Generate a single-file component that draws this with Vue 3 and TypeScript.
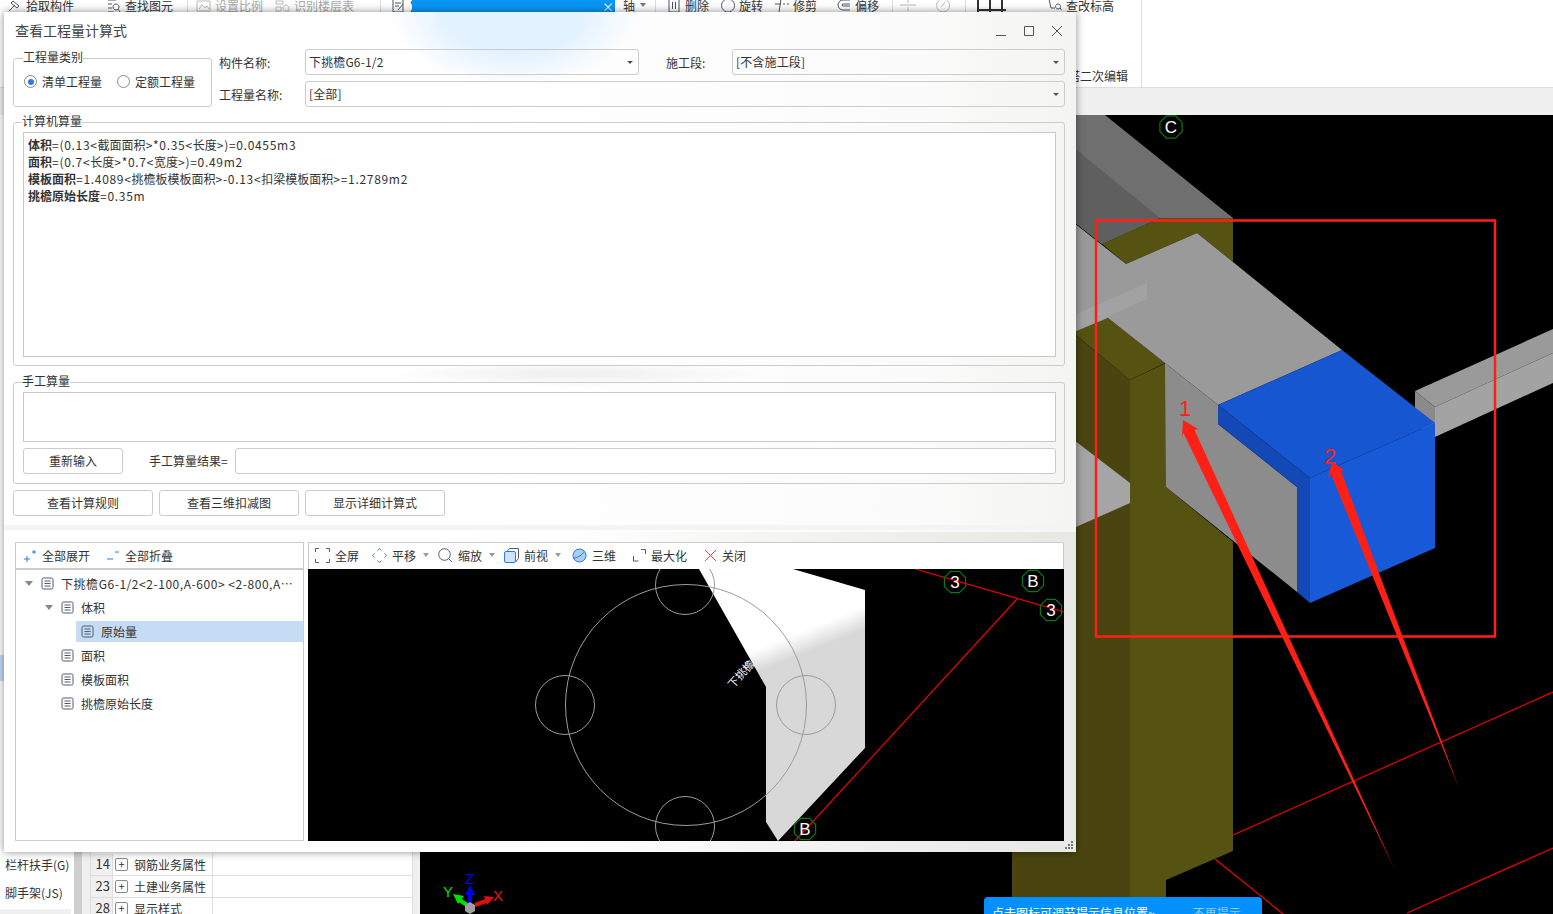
<script setup lang="ts">
import { ref } from "vue";

interface TopItem { text?: string; w?: number; ml: number; icon?: string; off?: boolean; sep?: boolean; caret?: boolean; grid?: boolean }
interface ToolItem { text: string; icon: string; ml: number; caret?: boolean }

const topItems: TopItem[] = [
  { text: "拾取构件", w: 48, ml: 7, icon: "M2 13 8 7M6 3l6 5-2 2-6-5z" },
  { text: "查找图元", w: 48, ml: 32, icon: "M2 2h8M2 6h4M2 10h4M2 14h6M10 6a3 3 0 1 0 .1 0M12 11l2 3" },
  { sep: true, ml: 14 },
  { text: "设置比例", w: 48, ml: 8, icon: "M1 3h13v10H1zM3 11l3-4 3 3 2-2 2 3", off: true },
  { text: "识别楼层表", w: 60, ml: 12, icon: "M1 3h7v3H1zM1 9h5v4H1zM11 7a3 3 0 1 0 .1 0M13 12l2 2", off: true },
  { sep: true, ml: 26 },
  { text: "定", w: 14, ml: 10, icon: "M2 1h10v13H2zM4 5h6M4 8h4M12 6l-5 6" },
  { text: "轴", w: 12, ml: 199, caret: true },
  { sep: true, ml: 9 },
  { text: "删除", w: 24, ml: 10, icon: "M3 1h10v13H3zM6.500 4v7M9.500 4v7" },
  { text: "旋转", w: 24, ml: 11, icon: "M8 1a6.500 6.500 0 1 0 .1 0" },
  { text: "修剪", w: 24, ml: 11, icon: "M1 6h6M9 6h2M13 6h2M7 1 5 14" },
  { text: "偏移", w: 24, ml: 19, icon: "M14 2H7a5 5 0 0 0 0 10h7M14 6H7a1 1 0 0 0 0 2h7" },
  { sep: true, ml: 13 },
  { ml: 7, off: true, icon: "M0 7h6M10 7h6M8 1v4M8 9v4M6 7h4" },
  { ml: 19, off: true, icon: "M8 1a6.500 6.500 0 1 0 .1 0M6 9l4-5" },
  { sep: true, ml: 14 },
  { ml: 11, grid: true },
  { text: "查改标高", w: 48, ml: 40, icon: "M2 1l2 9h4M11 6a2.500 2.500 0 1 0 .1 0M13 10l1.500 2" },
];

const viewTools: ToolItem[] = [
  { text: "全屏", icon: "full", ml: 6 },
  { text: "平移", icon: "pan", ml: 13, caret: true },
  { text: "缩放", icon: "zoom", ml: 9, caret: true },
  { text: "前视", icon: "cube", ml: 9, caret: true },
  { text: "三维", icon: "globe", ml: 11 },
  { text: "最大化", icon: "max", ml: 17 },
  { text: "关闭", icon: "close", ml: 17 },
];

const formulas = [
  { name: "体积", rest: "=(0.13<截面面积>*0.35<长度>)=0.0455m3" },
  { name: "面积", rest: "=(0.7<长度>*0.7<宽度>)=0.49m2" },
  { name: "模板面积", rest: "=1.4089<挑檐板模板面积>-0.13<扣梁模板面积>=1.2789m2" },
  { name: "挑檐原始长度", rest: "=0.35m" },
];

// 西文和符号比中文字宽，拆开后单独加字距
function tokens(s: string): { t: string; latin: boolean }[] {
  return (s.match(/[\u4e00-\u9fff]+|[^\u4e00-\u9fff]+/g) ?? []).map((t) => ({
    t,
    latin: !/[\u4e00-\u9fff]/.test(t),
  }));
}

const tree = [
  { label: "下挑檐G6-1/2<2-100,A-600> <2-800,A-600>", depth: 0, open: true },
  { label: "体积", depth: 1, open: true },
  { label: "原始量", depth: 2, selected: true },
  { label: "面积", depth: 1 },
  { label: "模板面积", depth: 1 },
  { label: "挑檐原始长度", depth: 1 },
];

const attrRows = [
  { no: 14, label: "钢筋业务属性" },
  { no: 23, label: "土建业务属性" },
  { no: 28, label: "显示样式" },
];

const quantityType = ref("list");

// 轴号圈是八边形
function octagon(cx: number, cy: number, r: number): string {
  const pts: string[] = [];
  for (let i = 0; i < 8; i++) {
    const a = (Math.PI / 4) * i + Math.PI / 8;
    pts.push(`${(cx + r * Math.cos(a)).toFixed(1)},${(cy + r * Math.sin(a)).toFixed(1)}`);
  }
  return pts.join(" ");
}

const viewBadges = [
  { t: "3", x: 955, y: 582 },
  { t: "B", x: 1033, y: 581 },
  { t: "3", x: 1051, y: 610 },
  { t: "B", x: 805, y: 829 },
];
</script>

<template>
  <div class="page">
    <header class="topbar">
      <div class="top-row">
        <template v-for="(it, i) in topItems" :key="i">
          <i v-if="it.sep" class="top-sep" :style="{ marginLeft: it.ml + 'px' }"></i>
          <svg v-else-if="it.grid" class="grid-ico" :style="{ marginLeft: it.ml + 'px' }" width="30" height="14" viewBox="0 0 30 14"><path d="M1 0v14M13 0v14M25 0v14M1 12h28" /></svg>
          <div v-else class="top-item" :class="{ off: it.off }" :style="{ marginLeft: it.ml + 'px' }">
            <svg v-if="it.icon" width="16" height="15" viewBox="0 0 16 15"><path :d="it.icon" /></svg>
            <span v-if="it.text" :style="{ width: it.w + 'px' }">{{ it.text }}</span>
            <i v-if="it.caret" class="top-caret"></i>
          </div>
        </template>
      </div>
      <div class="top-note">搭二次编辑</div>
    </header>
    <div class="band"></div>

    <div class="main">
      <aside class="side">
        <div class="side-mark"></div>
        <div class="side-item">栏杆扶手(G)</div>
        <div class="side-item">脚手架(JS)</div>
        <div class="side-current"></div>
      </aside>
      <div class="side-scroll"></div>
      <div class="attrs">
        <div v-for="r in attrRows" :key="r.no" class="attr-row">
          <span class="attr-no">{{ r.no }}</span>
          <span class="attr-name"><i class="plus">+</i>{{ r.label }}</span>
          <span class="attr-val"></span>
        </div>
      </div>

      <svg class="scene" viewBox="420 115 1133 799" width="1133" height="799">
        <!-- 后方梁 -->
        <polygon points="1040,115 1105,115 1233,218 1160,218 1102,244 1040,195" fill="#6f6f6f" />
        <polygon points="1040,120 1160,218 1102,244 1040,195" fill="#5f5f5f" />
        <polygon points="1160,218 1233,218 1233,262 1197,233 1126,264 1102,244" fill="#555212" />
        <!-- 柱 -->
        <polygon points="1012,282 1130,380 1130,914 1012,914" fill="#4a4510" />
        <polygon points="1130,380 1166,363 1166,487 1233,542 1233,851 1166,880 1166,914 1130,914" fill="#555212" />
        <polygon points="1040,340 1108,318 1165,363 1130,380 1076,335" fill="#555212" />
        <!-- 梁 -->
        <polygon points="1040,196 1126,264 1197,233 1342,350 1218,405 1165,363 1108,318 1040,346" fill="#9a9a9a" />
        <polygon points="1040,330 1147,283 1147,299 1040,347" fill="#a2a2a2" />
        <polygon points="1165,363 1218,405 1218,424 1297,487 1297,592 1166,487" fill="#8c8c8c" />
        <polygon points="1040,414 1130,483 1130,503 1040,543" fill="#a5a5a5" />
        <!-- 右侧次梁 -->
        <polygon points="1415,391 1553,329 1553,353 1435,407" fill="#9a9a9a" />
        <polygon points="1435,407 1553,353 1553,383 1435,437" fill="#a3a3a3" />
        <polygon points="1415,391 1435,407 1435,437 1415,424" fill="#8a8a8a" />
        <!-- 挑檐（蓝） -->
        <polygon points="1342,350 1435,423 1310,478 1218,405" fill="#1656d0" />
        <polygon points="1310,478 1435,423 1435,548 1310,603" fill="#1859d8" />
        <polygon points="1218,405 1310,478 1310,603 1297,592 1297,487 1218,424" fill="#1448b4" />
        <!-- 轴网 -->
        <g class="grid-line">
          <line x1="1233" y1="835" x2="1553" y2="692" />
          <line x1="1407" y1="913" x2="1553" y2="848" />
          <line x1="1215" y1="859" x2="1283" y2="914" />
        </g>
        <polygon :points="octagon(1171, 127, 12)" class="badge-thin" />
        <text x="1171" y="133" class="badge-text">C</text>
        <!-- 标注 -->
        <rect x="1096" y="220.500" width="399" height="416" class="mark-rect" />
        <polygon points="1183,420 1198,429 1194.500,430 1395,870 1183.500,433 1182,437" fill="#ff2015" />
        <polygon points="1332,462 1344,470 1341,471 1459,788 1331,474 1328,478" fill="#ff2015" />
        <text x="1185" y="416" class="mark-num">1</text>
        <text x="1330" y="464" class="mark-num">2</text>
        <!-- 坐标轴 -->
        <g class="axis">
          <path d="M470 905V892" stroke="#0000f0" stroke-width="4" />
          <polygon points="470,885 465,895 475,895" fill="#0000f0" />
          <path d="M467 905 458 899" stroke="#00e000" stroke-width="4" />
          <polygon points="453,894 464,896 458,904" fill="#00e000" />
          <path d="M475 905 486 901" stroke="#e01010" stroke-width="4" />
          <polygon points="494,897 484,896 487,905" fill="#e01010" />
          <polygon points="465,905 470,902 475,905 475,911 470,914 465,911" fill="#a0a0a0" />
          <text x="448" y="897" fill="#00e000">Y</text>
          <text x="469.500" y="884" fill="#0000f0">Z</text>
          <text x="498" y="901" fill="#f01010">X</text>
        </g>
      </svg>
    </div>

    <div class="toast">
      <span>点击图标可调节提示信息位置~</span>
      <span class="toast-off">不再提示</span>
    </div>
    <div class="blue-tab"><span>×</span></div>

    <section class="dialog">
      <div class="titlebar">
        <span class="title">查看工程量计算式</span>
        <div class="win-btns">
          <svg width="12" height="12" viewBox="0 0 12 12"><path d="M1 10.500h10" /></svg>
          <svg width="12" height="12" viewBox="0 0 12 12"><path d="M1.500 1.500h9v9h-9z" /></svg>
          <svg width="12" height="12" viewBox="0 0 12 12"><path d="M1 1l10 10M11 1 1 11" /></svg>
        </div>
      </div>

      <div class="head">
        <fieldset class="group type-group">
          <legend>工程量类别</legend>
          <label class="radio" @click="quantityType = 'list'">
            <i class="dot" :class="{ on: quantityType === 'list' }"></i>清单工程量
          </label>
          <label class="radio" @click="quantityType = 'norm'">
            <i class="dot" :class="{ on: quantityType === 'norm' }"></i>定额工程量
          </label>
        </fieldset>
        <div class="head-fields">
          <div class="field-row">
            <span class="lbl lbl-a">构件名称:</span>
            <div class="combo combo-a">下挑檐G6-1/2<i class="caret"></i></div>
            <span class="lbl lbl-b">施工段:</span>
            <div class="combo combo-b">[不含施工段]<i class="caret"></i></div>
          </div>
          <div class="field-row">
            <span class="lbl lbl-a">工程量名称:</span>
            <div class="combo combo-b">[全部]<i class="caret"></i></div>
          </div>
        </div>
      </div>

      <fieldset class="group calc-group">
        <legend>计算机算量</legend>
        <div class="memo memo-calc">
          <div v-for="f in formulas" :key="f.name" class="formula">
            <b>{{ f.name }}</b><span v-for="(p, i) in tokens(f.rest)" :key="i" :class="{ latin: p.latin }">{{ p.t }}</span>
          </div>
        </div>
      </fieldset>

      <fieldset class="group hand-group">
        <legend>手工算量</legend>
        <div class="memo memo-hand"></div>
        <div class="hand-row">
          <button class="btn btn-reset">重新输入</button>
          <span class="hand-lbl">手工算量结果=</span>
          <div class="hand-input"></div>
        </div>
      </fieldset>

      <div class="actions">
        <button class="btn btn-act">查看计算规则</button>
        <button class="btn btn-act">查看三维扣减图</button>
        <button class="btn btn-act">显示详细计算式</button>
      </div>

      <div class="divider"></div>

      <div class="panes">
        <div class="tree-pane">
          <div class="tree-tools">
            <span class="tt"><svg width="14" height="14" viewBox="0 0 14 14"><path d="M1 10h6M4 7v6M9 3h4M11 1v4" /></svg>全部展开</span>
            <span class="tt tt2"><svg width="14" height="14" viewBox="0 0 14 14"><path d="M1 10h6M9 3h4" /></svg>全部折叠</span>
          </div>
          <div class="tree-body">
            <div v-for="n in tree" :key="n.label" class="tree-row" :class="['d' + n.depth]">
              <div class="tree-inner" :class="{ selected: n.selected }">
                <i class="tree-caret" :class="{ hide: !n.open }"></i>
                <svg class="doc" width="13" height="13" viewBox="0 0 13 13">
                  <rect x="1" y="1" width="11" height="11" rx="1.500" />
                  <path d="M3.500 4h6M3.500 6.500h6M3.500 9h6" />
                </svg>
                <span class="tree-label">{{ n.label }}</span>
              </div>
            </div>
          </div>
        </div>

        <div class="view-pane">
          <div class="view-tools">
            <span v-for="t in viewTools" :key="t.text" class="vt" :style="{ marginLeft: t.ml + 'px' }">
              <svg v-if="t.icon === 'full'" width="15" height="15" viewBox="0 0 15 15" class="ico-dark"><path d="M.5 4V.5H4M11 .5h3.500V4M14.500 11v3.500H11M4 14.500H.5V11" /></svg>
              <svg v-else-if="t.icon === 'pan'" width="15" height="15" viewBox="0 0 15 15" class="ico-blue"><path d="M5.500 2.500 7.500.5l2 2M5.500 12.500l2 2 2-2M2.500 5.500l-2 2 2 2M12.500 5.500l2 2-2 2" /></svg>
              <svg v-else-if="t.icon === 'zoom'" width="15" height="15" viewBox="0 0 15 15" class="ico-dark"><circle cx="6.500" cy="6.500" r="5.800" /><path d="M10.800 10.800 14 14" /></svg>
              <svg v-else-if="t.icon === 'cube'" width="15" height="15" viewBox="0 0 15 15" class="ico-cube"><path d="M3 3.500 5.500.5h9v10l-3 3.500" class="back" /><rect x=".5" y="3.500" width="11" height="11" rx="1.500" /></svg>
              <svg v-else-if="t.icon === 'globe'" width="15" height="15" viewBox="0 0 15 15" class="ico-globe"><circle cx="7.500" cy="7.500" r="6.500" /><path d="M1.500 10c4 0 9-3 11-7" /></svg>
              <svg v-else-if="t.icon === 'max'" width="13" height="13" viewBox="0 0 13 13" class="ico-dark"><path d="M.5 7v5h5M8 .5h4.500V5" /></svg>
              <svg v-else width="13" height="13" viewBox="0 0 13 13" class="ico-red"><path d="M1 1l11 11M12 1 1 12" /></svg>
              <span>{{ t.text }}</span>
              <i v-if="t.caret" class="vt-caret"></i>
            </span>
          </div>
          <svg class="view-canvas" viewBox="308 569 756 272" width="756" height="272">
            <defs>
              <linearGradient id="beamShade" gradientUnits="userSpaceOnUse" x1="805" y1="630" x2="813" y2="650">
                <stop offset="0" stop-color="#ffffff" />
                <stop offset="1" stop-color="#d8d8d8" />
              </linearGradient>
            </defs>
            <text x="0" y="0" class="rot-text" transform="translate(733 689) rotate(-48)">下挑檐</text>
            <polygon points="699,569 793,569 865,590 865,748 778,841 766,822 766,687" fill="url(#beamShade)" />
            <g class="cad-circles">
              <circle cx="686" cy="705" r="120.500" />
              <circle cx="685" cy="585" r="29.500" />
              <circle cx="565" cy="705" r="29.500" />
              <circle cx="806" cy="705" r="29.500" />
              <circle cx="685" cy="826" r="29.500" />
            </g>
            <g class="grid-line">
              <line x1="915" y1="569" x2="1064" y2="612" />
              <line x1="1017" y1="599" x2="795" y2="841" />
            </g>
            <g v-for="b in viewBadges" :key="b.x">
              <polygon :points="octagon(b.x, b.y, 11.500)" class="badge" />
              <text :x="b.x" :y="b.y + 6" class="badge-text">{{ b.t }}</text>
            </g>
          </svg>
        </div>
      </div>

      <svg class="grip" width="10" height="10" viewBox="0 0 10 10"><path d="M7 1h2v2H7zM4 4h2v2H4zM7 4h2v2H7zM1 7h2v2H1zM4 7h2v2H4zM7 7h2v2H7z" /></svg>
    </section>
  </div>
</template>

<style>
html, body {
  overflow: hidden;
  background: #fff;
}
</style>

<style scoped>
.page {
  position: relative;
  width: 1553px;
  height: 914px;
  overflow: hidden;
  display: flex;
  flex-direction: column;
  font-family: "Noto Sans CJK SC", "Noto Sans", sans-serif;
  font-size: 12px;
  color: #333;
  background: #fff;
}

/* 顶部工具栏 */
.topbar {
  position: relative;
  height: 88px;
  flex: none;
  box-sizing: border-box;
  border-bottom: 1px solid #ddd;
  overflow: hidden;
}
.topbar::after {
  content: "";
  position: absolute;
  left: 1141px;
  top: 0;
  bottom: 0;
  width: 1px;
  background: #ddd;
}
.top-row {
  display: flex;
  align-items: center;
  height: 12px;
  white-space: nowrap;
  transform: translateY(-1px);
}
.top-item {
  display: flex;
  align-items: center;
  gap: 3px;
  flex: none;
}
.top-item svg {
  fill: none;
  stroke: #4a5568;
  stroke-width: 1;
  flex: none;
}
.top-item.off {
  color: #aaa;
}
.top-item.off svg {
  stroke: #bbb;
}
.top-sep {
  width: 1px;
  height: 16px;
  flex: none;
  background: #ddd;
}
.top-caret {
  margin: 3px 0 0 2px;
  border: 3px solid transparent;
  border-top: 4px solid #777;
}
.grid-ico {
  flex: none;
  fill: none;
  stroke: #333;
  stroke-width: 2;
}
.top-note {
  position: absolute;
  left: 1068px;
  top: 67px;
}
.band {
  height: 27px;
  flex: none;
  background: #f0f0f0;
}

/* 底层主区 */
.main {
  flex: 1;
  display: flex;
  background: #f0f0f0;
  min-height: 0;
}
.side {
  width: 74px;
  flex: none;
  background: #fff;
  box-sizing: border-box;
  padding: 736px 0 0 5px;
  position: relative;
}
.side-mark {
  position: absolute;
  left: 0;
  top: 540px;
  width: 4px;
  height: 26px;
  background: #c6dcf5;
}
.side-item {
  height: 28px;
  line-height: 28px;
  white-space: nowrap;
}
.side-current {
  height: 6px;
  margin: 2px 3px 0 -5px;
  background: #f0f0f0;
}
.side-scroll {
  width: 8px;
  flex: none;
  background: #cfcfcf;
}
.attrs {
  width: 323px;
  flex: none;
  margin-left: 8px;
  box-sizing: border-box;
  padding-top: 739px;
  background: #fff;
  border-left: 1px solid #ddd;
  border-right: 1px solid #ddd;
}
.attr-row {
  display: flex;
  height: 21px;
  line-height: 20px;
  border-bottom: 1px solid #ddd;
}
.attr-no {
  width: 22px;
  flex: none;
  padding-right: 2px;
  box-sizing: border-box;
  text-align: right;
  background: #f0f0f0;
  border-right: 1px solid #ddd;
  font-size: 13px;
}
.attr-name {
  width: 100px;
  flex: none;
  display: flex;
  align-items: center;
  padding-left: 2px;
  box-sizing: border-box;
  border-right: 1px solid #ddd;
}
.plus {
  width: 11px;
  height: 11px;
  margin-right: 6px;
  border: 1px solid #888;
  border-radius: 2px;
  font-style: normal;
  font-size: 11px;
  line-height: 10px;
  text-align: center;
}
.scene {
  position: absolute;
  left: 420px;
  top: 115px;
  background: #000;
}
.grid-line line {
  stroke: #f00000;
  stroke-width: 1.2;
}
.badge,
.badge-thin {
  fill: none;
  stroke: #0a7a0a;
  stroke-width: 1.2;
}
.badge-text {
  fill: #fff;
  font-family: "Liberation Sans", sans-serif;
  font-size: 17px;
  text-anchor: middle;
}
.mark-rect {
  fill: none;
  stroke: #ff2015;
  stroke-width: 2.500;
}
.mark-num {
  fill: #ff2015;
  font-family: "Liberation Sans", sans-serif;
  font-size: 22px;
  text-anchor: middle;
}
.axis text {
  font-family: "Liberation Sans", sans-serif;
  font-size: 15px;
  text-anchor: middle;
}

.toast {
  position: absolute;
  left: 984px;
  top: 897px;
  width: 278px;
  height: 30px;
  box-sizing: border-box;
  padding: 7px 0 0 8px;
  display: flex;
  gap: 38px;
  color: #fff;
  background: #0091ff;
  border-radius: 4px 4px 0 0;
}
.toast-off {
  color: #8ecbff;
}
.blue-tab {
  position: absolute;
  left: 412px;
  top: 0;
  width: 203px;
  height: 12px;
  background: #0a96f5;
  color: #fff;
  text-align: right;
  line-height: 14px;
  padding-right: 1px;
  box-sizing: border-box;
}

/* 弹窗 */
.dialog {
  position: absolute;
  left: 4px;
  top: 12px;
  width: 1072px;
  height: 840px;
  box-sizing: border-box;
  padding: 0 11px 0 9px;
  box-shadow: 0 0 8px rgba(0, 0, 0, 0.45);
  background:
    radial-gradient(ellipse 125px 75px at 510px 0, #e3f2ff 55%, rgba(227, 242, 255, 0)),
    radial-gradient(ellipse 190px 12px at 570px 362px, #f1f1f1 20%, rgba(241, 241, 241, 0)),
    linear-gradient(90deg, rgba(232, 232, 228, 0) 55%, #e8e8e4 98%) 0 100% / 100% 320px no-repeat,
    linear-gradient(90deg, #fff 40%, #fbfbfb 85%, #f4f4f2);
}
.titlebar {
  display: flex;
  align-items: center;
  justify-content: space-between;
  height: 37px;
  margin-left: 2px;
}
.title {
  font-size: 14px;
  line-height: 20px;
  margin-top: -2px;
  color: #444;
}
.win-btns {
  display: flex;
  gap: 16px;
  margin-right: 2px;
}
.win-btns svg {
  fill: none;
  stroke: #555;
  stroke-width: 1;
}

.head {
  display: flex;
  height: 58px;
}
.group {
  margin: 0;
  padding: 0 8px 9px 9px;
  border: 1px solid #ccc;
  border-radius: 3px;
  min-width: 0;
}
.group legend {
  margin-left: -1px;
  padding: 0;
  height: 16px;
  line-height: 14px;
}
.type-group {
  width: 199px;
  height: 57px;
  box-sizing: border-box;
  flex: none;
  display: flex;
  align-items: center;
  gap: 15px;
  padding: 0 0 9px 10px;
  margin-top: 1px;
}
.type-group legend {
  margin-left: -1px;
}
.radio {
  display: flex;
  align-items: center;
  gap: 5px;
  white-space: nowrap;
}
.dot {
  width: 13px;
  height: 13px;
  box-sizing: border-box;
  border: 1px solid #888;
  border-radius: 50%;
  background: #fff;
  position: relative;
}
.dot.on::after {
  content: "";
  position: absolute;
  left: 2.500px;
  top: 2.500px;
  width: 6px;
  height: 6px;
  border-radius: 50%;
  background: #2b7de0;
}
.head-fields {
  flex: 1;
  margin-left: 7px;
  display: flex;
  flex-direction: column;
  gap: 6px;
}
.field-row {
  display: flex;
  align-items: center;
}
.lbl {
  flex: none;
  white-space: nowrap;
}
.lbl-a {
  width: 86px;
}
.lbl-b {
  width: 66px;
  margin-left: 27px;
}
.combo {
  position: relative;
  box-sizing: border-box;
  height: 26px;
  line-height: 24px;
  padding-left: 3px;
  letter-spacing: 0.15px;
  border: 1px solid #ccc;
  border-radius: 3px;
}
.combo-a {
  width: 334px;
  flex: none;
}
.combo-b {
  flex: 1;
}
.caret {
  position: absolute;
  right: 5px;
  top: 11px;
  border: 3px solid transparent;
  border-top: 3px solid #555;
}

.calc-group {
  height: 252px;
  box-sizing: border-box;
  margin-top: 7px;
  background: transparent;
}
.memo {
  box-sizing: border-box;
  border: 1px solid #c8c8c8;
  background: #fff;
}
.memo-calc {
  height: 225px;
  margin-top: 2px;
  padding: 3px 4px;
}
.formula {
  height: 17px;
  line-height: 17px;
  white-space: nowrap;
}
.formula b {
  font-weight: 700;
}
.latin {
  letter-spacing: 0.7px;
}
.hand-group {
  height: 110px;
  box-sizing: border-box;
  margin-top: 8px;
}
.memo-hand {
  height: 50px;
  margin-top: 2px;
}
.hand-row {
  display: flex;
  align-items: center;
  margin-top: 6px;
}
.btn {
  height: 26px;
  padding: 0 0 2px;
  box-sizing: border-box;
  font: inherit;
  color: #333;
  background: #fff;
  border: 1px solid #ccc;
  border-radius: 3px;
}
.btn-reset {
  width: 100px;
  flex: none;
}
.hand-lbl {
  margin: -2px 0 0 26px;
  width: 86px;
  flex: none;
  white-space: nowrap;
}
.hand-input {
  flex: 1;
  height: 26px;
  box-sizing: border-box;
  border: 1px solid #ccc;
  border-radius: 3px;
  background: #fff;
}
.actions {
  display: flex;
  gap: 6px;
  margin-top: 6px;
}
.btn-act {
  width: 140px;
}
.divider {
  height: 5px;
  margin: 9px -11px 0 -9px;
  background: #f4f4f4;
}
.panes {
  display: flex;
  gap: 4px;
  margin: 12px 1px 0 2px;
  height: 299px;
}

.tree-pane {
  width: 289px;
  flex: none;
  box-sizing: border-box;
  border: 1px solid #ccc;
  background: #fff;
  display: flex;
  flex-direction: column;
}
.tree-tools {
  height: 27px;
  flex: none;
  box-sizing: border-box;
  border-bottom: 2px solid #ccc;
  display: flex;
  align-items: center;
  padding-left: 7px;
}
.tt {
  display: flex;
  align-items: center;
  gap: 5px;
}
.tt svg {
  fill: none;
  stroke: #2b7de0;
  stroke-width: 1;
}
.tt2 {
  margin-left: 16px;
}
.tree-body {
  padding-top: 1px;
}
.tree-row {
  height: 24px;
  display: flex;
  align-items: center;
  overflow: hidden;
  min-width: 0;
}
.tree-inner {
  flex: 1;
  min-width: 0;
  height: 21px;
  display: flex;
  align-items: center;
}
.tree-inner.selected {
  background: #c6dcf5;
}
.d0 {
  padding-left: 9px;
}
.d1 {
  padding-left: 29px;
}
.d2 {
  padding-left: 60px;
}
.d2 .tree-caret {
  display: none;
}
.d2 .doc {
  margin-left: 5px;
}
.d0 .tree-label {
  letter-spacing: 0.55px;
}
.tree-caret {
  flex: none;
  width: 0;
  height: 0;
  margin-top: 4px;
  border: 4px solid transparent;
  border-top: 5px solid #888;
  margin-right: 8px;
}
.tree-caret.hide {
  visibility: hidden;
}
.doc {
  flex: none;
  margin-right: 7px;
  fill: none;
  stroke: #555b6e;
  stroke-width: 1;
}
.tree-label {
  white-space: nowrap;
  overflow: hidden;
  text-overflow: ellipsis;
  min-width: 0;
  padding-right: 9px;
}

.view-pane {
  flex: 1;
  min-width: 0;
  display: flex;
  flex-direction: column;
}
.view-tools {
  height: 27px;
  flex: none;
  box-sizing: border-box;
  padding-bottom: 2px;
  border: 1px solid #ccc;
  border-bottom: none;
  background: #fff;
  display: flex;
  align-items: center;
}
.vt {
  display: flex;
  align-items: center;
  gap: 5px;
  white-space: nowrap;
}
.vt svg {
  fill: none;
  stroke-width: 1;
  flex: none;
}
.ico-dark {
  stroke: #555b6e;
}
.ico-blue {
  stroke: #2b7de0;
}
.ico-cube {
  stroke: #2b7de0;
}
.ico-cube rect {
  fill: #cfe3fa;
}
.ico-cube .back {
  stroke: #555b6e;
}
.ico-globe {
  stroke: #2b7de0;
}
.ico-globe circle {
  fill: #a9cdf5;
}
.ico-red {
  stroke: #f04040;
}
.vt-caret {
  margin: 3px 0 0 2px;
  border: 3px solid transparent;
  border-top: 4px solid #999;
}
.view-canvas {
  display: block;
  flex: none;
  background: #000;
}
.rot-text {
  fill: #fff;
  font-size: 11px;
}
.cad-circles circle {
  fill: none;
  stroke: #9c9c9c;
  stroke-width: 1;
}
.grip {
  position: absolute;
  right: 2px;
  bottom: 2px;
  fill: #777;
}
</style>
